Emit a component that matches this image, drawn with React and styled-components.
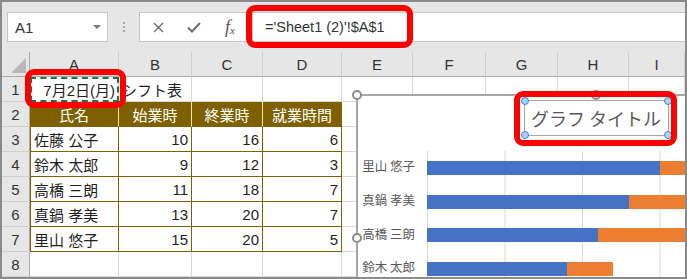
import React from "react";
import styled, { createGlobalStyle } from "styled-components";

const GlobalStyle = createGlobalStyle`
  html, body { margin: 0; padding: 0; background: #fff; }
  body {
    font-family: "Liberation Sans", "Noto Sans CJK JP", sans-serif;
    overflow: hidden;
  }
`;

const Frame = styled.div`
  position: relative;
  width: 687px;
  height: 279px;
  box-sizing: border-box;
  border: 2px solid #8a8a8a;
  background: #e6e6e6;
  overflow: hidden;
  display: flex;
  flex-direction: column;
`;

const FormulaBar = styled.div`
  height: 50px;
  flex: none;
  box-sizing: border-box;
  padding: 10px 0 10px 5px;
  display: flex;
  align-items: stretch;
`;

const NameBox = styled.div`
  width: 101px;
  box-sizing: border-box;
  background: #fff;
  border: 1px solid #c6c6c6;
  display: flex;
  align-items: center;
  justify-content: space-between;
  padding: 0 6px 0 7px;
  font-size: 15px;
  color: #333;
`;

const DropArrow = styled.span`
  width: 0;
  height: 0;
  border-left: 4px solid transparent;
  border-right: 4px solid transparent;
  border-top: 4px solid #777;
`;

const Grip = styled.div`
  width: 31px;
  display: flex;
  flex-direction: column;
  align-items: center;
  justify-content: center;
  gap: 2px;
  span {
    width: 2px;
    height: 2px;
    background: #a8a8a8;
  }
`;

const ButtonBox = styled.div`
  width: 113px;
  box-sizing: border-box;
  background: #fff;
  border: 1px solid #c6c6c6;
  border-right: none;
  display: flex;
`;

const BarButton = styled.div`
  width: 36px;
  display: flex;
  align-items: center;
  justify-content: center;
  color: #6e6e6e;
`;

const FxMark = styled.span`
  font-family: "Liberation Serif", serif;
  font-style: italic;
  font-size: 18px;
  color: #555;
  sub {
    font-size: 11px;
    vertical-align: -1px;
  }
`;

const FormulaInput = styled.div`
  flex: 1;
  background: #fff;
  border: 1px solid #c6c6c6;
  border-right: none;
  display: flex;
  align-items: center;
  padding-left: 12px;
  font-size: 14.5px;
  color: #333;
  white-space: nowrap;
`;

const Sheet = styled.div`
  display: grid;
  grid-template-columns: 28px 89px 73px 71px 79px 71px 73px 72px 71px 1fr;
  grid-auto-rows: 25px;
  background: #fff;
`;

const Corner = styled.div`
  box-sizing: border-box;
  background: #e6e6e6;
  border-right: 1px solid #ababab;
  border-bottom: 1px solid #ababab;
  display: flex;
  align-items: flex-end;
  justify-content: flex-end;
  padding: 0 3px 3px 0;
  &::after {
    content: "";
    width: 0;
    height: 0;
    border-left: 15px solid transparent;
    border-bottom: 15px solid #b8b8b8;
  }
`;

const ColHead = styled.div`
  box-sizing: border-box;
  background: #e6e6e6;
  border-right: 1px solid #cfcfcf;
  border-bottom: 1px solid #ababab;
  display: flex;
  align-items: center;
  justify-content: center;
  font-size: 15px;
  color: #333;
`;

const RowHead = styled.div`
  box-sizing: border-box;
  background: #e6e6e6;
  border-right: 1px solid #ababab;
  border-bottom: 1px solid #cfcfcf;
  display: flex;
  align-items: center;
  justify-content: center;
  font-size: 15px;
  color: #333;
`;

const lineColor = (p) =>
  p.$kind === "td" ? "#7f6000" : p.$kind === "th" ? (p.$end ? "#7f6000" : "#f3e4a8") : "#d9d9d9";

const Cell = styled.div`
  box-sizing: border-box;
  border-right: 1px solid ${lineColor};
  border-bottom: 1px solid ${(p) => (p.$kind ? "#7f6000" : "#d9d9d9")};
  border-left: ${(p) => (p.$lead ? "1px solid #7f6000" : "none")};
  background: ${(p) => (p.$kind === "th" ? "#7f6000" : "#fff")};
  color: ${(p) => (p.$kind === "th" ? "#fff" : "#1f1f1f")};
  display: flex;
  align-items: center;
  justify-content: ${(p) =>
    p.$align === "right" ? "flex-end" : p.$align === "center" ? "center" : "flex-start"};
  padding: 0 3px;
  font-size: 15px;
  white-space: nowrap;
  outline: ${(p) => (p.$copy ? "2px dashed #217346" : "none")};
  outline-offset: -2px;
`;

const Chart = styled.div`
  position: absolute;
  left: 354px;
  top: 92px;
  width: 480px;
  height: 288px;
  box-sizing: border-box;
  border: 2px solid #a6a6a6;
  background: #fff;
  display: flex;
  flex-direction: column;
  align-items: center;
  z-index: 2;
`;

const Handle = styled.span`
  position: absolute;
  left: ${(p) => p.$x - 5}px;
  top: ${(p) => p.$y - 5}px;
  width: 10px;
  height: 10px;
  box-sizing: border-box;
  border-radius: 50%;
  border: 2px solid #8c8c8c;
  background: #fff;
`;

const TitleBox = styled.div`
  position: relative;
  margin-top: 4px;
  width: 145px;
  height: 36px;
  box-sizing: border-box;
  border: 1px solid #a6a6a6;
  display: flex;
  align-items: center;
  justify-content: center;
  font-family: "Noto Sans CJK JP", sans-serif;
  font-size: 18px;
  color: #595959;
  white-space: nowrap;
`;

const Dot = styled.span`
  position: absolute;
  width: 8px;
  height: 8px;
  box-sizing: border-box;
  border-radius: 50%;
  border: 1px solid #3a87d6;
  background: #a9d2f6;
  ${(p) => (p.$top ? "top: -4px;" : "bottom: -4px;")}
  ${(p) => (p.$left ? "left: -4px;" : "right: -4px;")}
`;

const Plot = styled.div`
  align-self: stretch;
  margin-top: 15px;
  display: grid;
  grid-template-columns: 69px 1fr;
  grid-auto-rows: 33.7px;
`;

const CatLabel = styled.div`
  display: flex;
  align-items: center;
  justify-content: flex-end;
  padding-right: 12px;
  padding-bottom: 4px;
  font-family: "Noto Sans CJK JP", sans-serif;
  font-size: 12.5px;
  color: #595959;
  white-space: nowrap;
`;

const Track = styled.div`
  display: flex;
  align-items: center;
  background-image: linear-gradient(to right, #d9d9d9 1px, transparent 1px);
  background-size: 77.5px 100%;
`;

const Seg = styled.div`
  height: 14px;
  flex: none;
  background: ${(p) => p.$color};
`;

const Highlight = styled.div`
  position: absolute;
  left: ${(p) => p.$x}px;
  top: ${(p) => p.$y}px;
  width: ${(p) => p.$w}px;
  height: ${(p) => p.$h}px;
  box-sizing: border-box;
  border: 6px solid #ff0000;
  border-radius: 9px;
  z-index: 5;
`;

const COLS = ["A", "B", "C", "D", "E", "F", "G", "H", "I"];
const HEAD = ["氏名", "始業時", "終業時", "就業時間"];
const STAFF = [
  ["佐藤 公子", 10, 16, 6],
  ["鈴木 太郎", 9, 12, 3],
  ["高橋 三朗", 11, 18, 7],
  ["真鍋 孝美", 13, 20, 7],
  ["里山 悠子", 15, 20, 5],
];
const UNIT = 15.5;

function Empty({ from }) {
  return COLS.slice(from).map((c) => <Cell key={c} />);
}

export default function App() {
  const chartRows = [...STAFF].reverse();
  return (
    <>
      <GlobalStyle />
      <Frame>
        <FormulaBar>
          <NameBox>
            A1
            <DropArrow />
          </NameBox>
          <Grip>
            <span />
            <span />
            <span />
          </Grip>
          <ButtonBox>
            <BarButton>
              <svg width="11" height="11" viewBox="0 0 11 11">
                <path d="M1 1L10 10M10 1L1 10" stroke="currentColor" strokeWidth="1.4" fill="none" />
              </svg>
            </BarButton>
            <BarButton>
              <svg width="14" height="11" viewBox="0 0 14 11">
                <path d="M1 5.5L5 9.5L13 1" stroke="currentColor" strokeWidth="2" fill="none" />
              </svg>
            </BarButton>
            <BarButton>
              <FxMark>
                f<sub>x</sub>
              </FxMark>
            </BarButton>
          </ButtonBox>
          <FormulaInput>='Sheet1 (2)'!$A$1</FormulaInput>
        </FormulaBar>

        <Sheet>
          <Corner />
          {COLS.map((c) => (
            <ColHead key={c}>{c}</ColHead>
          ))}

          <RowHead>1</RowHead>
          <Cell $align="right" $copy>7月2日(月)</Cell>
          <Cell>シフト表</Cell>
          <Empty from={2} />

          <RowHead>2</RowHead>
          {HEAD.map((h, i) => (
            <Cell key={h} $kind="th" $align="center" $end={i === 3}>
              {h}
            </Cell>
          ))}
          <Empty from={4} />

          {STAFF.map((r, i) => (
            <React.Fragment key={r[0]}>
              <RowHead>{i + 3}</RowHead>
              <Cell $kind="td" $lead>
                {r[0]}
              </Cell>
              <Cell $kind="td" $align="right">{r[1]}</Cell>
              <Cell $kind="td" $align="right">{r[2]}</Cell>
              <Cell $kind="td" $align="right">{r[3]}</Cell>
              <Empty from={4} />
            </React.Fragment>
          ))}

          <RowHead>8</RowHead>
          <Empty from={0} />
        </Sheet>

        <Chart>
          <Handle $x={-1} $y={-1} />
          <Handle $x={238} $y={-1} />
          <Handle $x={-1} $y={142} />
          <TitleBox>
            グラフ タイトル
            <Dot $top $left />
            <Dot $top />
            <Dot $left />
            <Dot />
          </TitleBox>
          <Plot>
            {chartRows.map((r) => (
              <React.Fragment key={r[0]}>
                <CatLabel>{r[0]}</CatLabel>
                <Track>
                  <Seg $color="#4472c4" style={{ width: r[1] * UNIT }} />
                  <Seg $color="#ed7d31" style={{ width: r[3] * UNIT }} />
                </Track>
              </React.Fragment>
            ))}
          </Plot>
        </Chart>

        <Highlight $x={244} $y={3} $w={167} $h={43} />
        <Highlight $x={23} $y={67} $w={101} $h={39} />
        <Highlight $x={512} $y={89} $w={163} $h={55} />
      </Frame>
    </>
  );
}
